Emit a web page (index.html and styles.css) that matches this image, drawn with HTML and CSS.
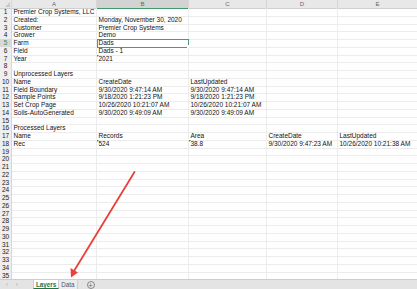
FILE: index.html
```html
<!DOCTYPE html>
<html>
<head>
<meta charset="utf-8">
<link rel="stylesheet" href="styles.css">
</head>
<body>
<div class="app">
  <div class="sheet">
    <div class="row hdr"><i class="corner"></i><b>A</b><b class="sel">B</b><b>C</b><b>D</b><b>E</b></div>
    <div class="row"><i>1</i><b>Premier Crop Systems, LLC</b><b></b><b></b><b></b><b></b></div>
    <div class="row"><i>2</i><b>Created:</b><b>Monday, November 30, 2020</b><b></b><b></b><b></b></div>
    <div class="row"><i>3</i><b>Customer</b><b>Premier Crop Systems</b><b></b><b></b><b></b></div>
    <div class="row"><i>4</i><b>Grower</b><b>Demo</b><b></b><b></b><b></b></div>
    <div class="row"><i class="sel">5</i><b>Farm</b><b class="active">Dads<span class="handle"></span></b><b></b><b></b><b></b></div>
    <div class="row"><i>6</i><b>Field</b><b>Dads - 1</b><b></b><b></b><b></b></div>
    <div class="row"><i>7</i><b>Year</b><b class="flag">2021</b><b></b><b></b><b></b></div>
    <div class="row"><i>8</i><b></b><b></b><b></b><b></b><b></b></div>
    <div class="row"><i>9</i><b>Unprocessed Layers</b><b></b><b></b><b></b><b></b></div>
    <div class="row"><i>10</i><b>Name</b><b>CreateDate</b><b>LastUpdated</b><b></b><b></b></div>
    <div class="row"><i>11</i><b>Field Boundary</b><b>9/30/2020 9:47:14 AM</b><b>9/30/2020 9:47:14 AM</b><b></b><b></b></div>
    <div class="row"><i>12</i><b>Sample Points</b><b>9/18/2020 1:21:23 PM</b><b>9/18/2020 1:21:23 PM</b><b></b><b></b></div>
    <div class="row"><i>13</i><b>Set Crop Page</b><b>10/26/2020 10:21:07 AM</b><b>10/26/2020 10:21:07 AM</b><b></b><b></b></div>
    <div class="row"><i>14</i><b>Soils-AutoGenerated</b><b>9/30/2020 9:49:09 AM</b><b>9/30/2020 9:49:09 AM</b><b></b><b></b></div>
    <div class="row"><i>15</i><b></b><b></b><b></b><b></b><b></b></div>
    <div class="row"><i>16</i><b>Processed Layers</b><b></b><b></b><b></b><b></b></div>
    <div class="row"><i>17</i><b>Name</b><b>Records</b><b>Area</b><b>CreateDate</b><b>LastUpdated</b></div>
    <div class="row"><i>18</i><b>Rec</b><b class="flag">524</b><b class="flag">38.8</b><b>9/30/2020 9:47:23 AM</b><b>10/26/2020 10:21:38 AM</b></div>
    <div class="row"><i>19</i><b></b><b></b><b></b><b></b><b></b></div>
    <div class="row"><i>20</i><b></b><b></b><b></b><b></b><b></b></div>
    <div class="row"><i>21</i><b></b><b></b><b></b><b></b><b></b></div>
    <div class="row"><i>22</i><b></b><b></b><b></b><b></b><b></b></div>
    <div class="row"><i>23</i><b></b><b></b><b></b><b></b><b></b></div>
    <div class="row"><i>24</i><b></b><b></b><b></b><b></b><b></b></div>
    <div class="row"><i>25</i><b></b><b></b><b></b><b></b><b></b></div>
    <div class="row"><i>26</i><b></b><b></b><b></b><b></b><b></b></div>
    <div class="row"><i>27</i><b></b><b></b><b></b><b></b><b></b></div>
    <div class="row"><i>28</i><b></b><b></b><b></b><b></b><b></b></div>
    <div class="row"><i>29</i><b></b><b></b><b></b><b></b><b></b></div>
    <div class="row"><i>30</i><b></b><b></b><b></b><b></b><b></b></div>
    <div class="row"><i>31</i><b></b><b></b><b></b><b></b><b></b></div>
    <div class="row"><i>32</i><b></b><b></b><b></b><b></b><b></b></div>
    <div class="row"><i>33</i><b></b><b></b><b></b><b></b><b></b></div>
    <div class="row"><i>34</i><b></b><b></b><b></b><b></b><b></b></div>
    <div class="row"><i>35</i><b></b><b></b><b></b><b></b><b></b></div>
    <svg class="arrow" width="417" height="289" viewBox="0 0 417 289">
      <line x1="134.5" y1="172" x2="74" y2="271" stroke="#e8413b" stroke-width="1.8" stroke-linecap="round"/>
      <polygon points="71,277.5 70.5,268 78,272.5" fill="#e8413b"/>
    </svg>
  </div>
  <div class="tabs">
    <span class="nav">&#8249;</span><span class="nav">&#8250;</span>
    <span class="tab on">Layers</span><span class="tab">Data</span>
    <span class="add">+</span>
  </div>
</div>
</body>
</html>
```

FILE: styles.css
```css
* { box-sizing: border-box; margin: 0; padding: 0; }
html, body { width: 417px; height: 289px; overflow: hidden; background: #fff; }
body { font-family: "Liberation Sans", Arial, sans-serif; font-size: 6.5px; color: #111; }
.app { display: flex; flex-direction: column; width: 417px; height: 289px; }
.sheet { position: relative; height: 279px; overflow: hidden; }
.row { display: grid; grid-template-columns: 12px 85px 92px 78px 71px 80px; height: 7.75px; line-height: 7.75px; }
.row i { font-style: normal; text-align: center; background: #efefef; color: #222; border-right: 1px solid #d6d6d6; border-bottom: 1px solid #dedede; font-size: 6.5px; }
.row b { font-weight: normal; white-space: nowrap; overflow: visible; padding-left: 1.5px; border-right: 1px solid #ececec; border-bottom: 1px solid #ececec; position: relative; }
.row i.sel { background: #d9d9d9; color: #2e8b57; }
.hdr { height: 8px; line-height: 8px; }
.hdr b { background: #e8e8e8; color: #666; text-align: center; padding: 0; border-right: 1px solid #d6d6d6; border-bottom: 1px solid #cfcfcf; font-size: 6px; }
.hdr b.sel { background: #d3d3d3; color: #2a8552; border-bottom: 1px solid #3f9966; }
.hdr .corner { background: #e8e8e8; border-bottom: 1px solid #cfcfcf; position: relative; }
.hdr .corner::after { content: ""; position: absolute; right: 1.5px; bottom: 1.5px; border-left: 5px solid transparent; border-bottom: 5px solid #c8c8c8; }
.active { outline: 1px solid #4e9a70; outline-offset: -1px; z-index: 2; }
.handle { position: absolute; right: -1px; bottom: -1px; width: 2.5px; height: 2.5px; background: #217346; border: 0.5px solid #fff; }
.flag::before { content: ""; position: absolute; left: 0; top: 0; border-top: 2.5px solid #22a04b; border-right: 2.5px solid transparent; }
.arrow { position: absolute; left: 0; top: 0; pointer-events: none; }
.tabs { height: 10px; background: #e4e4e4; border-top: 1px solid #cdcdcd; display: flex; align-items: stretch; font-size: 6.3px; line-height: 9px; }
.nav { color: #b5b5b5; width: 10px; text-align: center; font-size: 7px; }
.nav:first-child { margin-left: 2px; }
.tab { padding: 0 2px; color: #555; border-right: 1px solid #cfcfcf; background: #ececec; }
.tab.on { margin-left: 11px; background: #fff; color: #217346; font-weight: bold; border-bottom: 1.5px solid #217346; border-left: 1px solid #cfcfcf; }
.add { margin-left: 9px; margin-top: 1px; width: 8px; height: 8px; border: 0.8px solid #888; border-radius: 50%; color: #666; text-align: center; line-height: 7px; font-size: 7px; }
```
